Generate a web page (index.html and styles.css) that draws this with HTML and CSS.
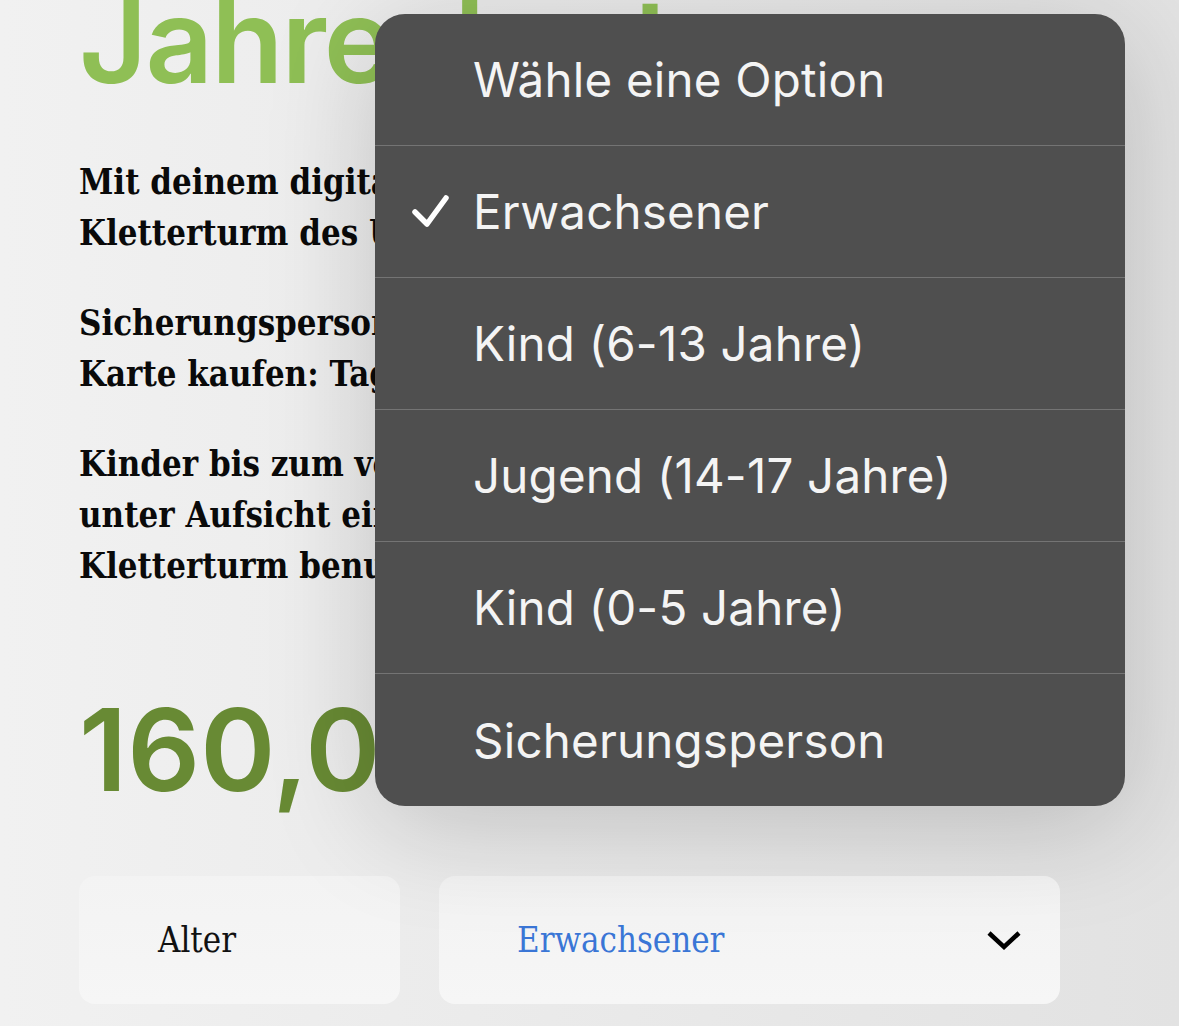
FILE: index.html
```html
<!DOCTYPE html>
<html lang="de">
<head>
<meta charset="utf-8">
<title>Jahreskarte</title>
<link rel="stylesheet" href="styles.css">
</head>
<body>
<main class="page">
  <h1 class="title">Jahreskarte</h1>
  <p class="text">Mit deinem digitalen Ticket kannst du den<br>Kletterturm des Uferparks ein Jahr nutzen.</p>
  <p class="text">Sicherungspersonen brauchen keine eigene<br>Karte kaufen: Tageskarte genügt.</p>
  <p class="text">Kinder bis zum vollendeten 6. Lebensjahr<br>unter Aufsicht eines Erwachsenen den<br>Kletterturm benutzen.</p>
  <div class="price">160,00 €</div>
  <div class="fields">
    <div class="field label">Alter</div>
    <div class="field select">
      <span class="value">Erwachsener</span>
      <svg class="chevron" width="36" height="22" viewBox="0 0 36 22" aria-hidden="true"><path d="M3 4 L18 18 L33 4" fill="none" stroke="#000" stroke-width="4.5"/></svg>
    </div>
  </div>
</main>
<div class="menu" role="listbox">
  <div class="option">Wähle eine Option</div>
  <div class="option selected"><svg class="check" width="40" height="36" viewBox="0 0 40 36" aria-hidden="true"><path d="M4 19 L16 31 L35 5" fill="none" stroke="#fff" stroke-width="5.5" stroke-linecap="round" stroke-linejoin="round"/></svg>Erwachsener</div>
  <div class="option">Kind (6-13 Jahre)</div>
  <div class="option">Jugend (14-17 Jahre)</div>
  <div class="option">Kind (0-5 Jahre)</div>
  <div class="option last">Sicherungsperson</div>
</div>
</body>
</html>
```
FILE: styles.css
```css
html, body {
  margin: 0;
  padding: 0;
  height: 100%;
  overflow: hidden;
}
body {
  background: #ececec;
  background-image: linear-gradient(90deg, #f1f1f1 0%, #ebebeb 40%, #e2e2e2 100%);
  font-family: "DejaVu Serif Condensed", "DejaVu Serif", serif;
}
.page {
  padding: 0 119px 0 79px;
  display: flex;
  flex-direction: column;
}
.title {
  margin: -30px 0 0;
  font-family: Inter, "Noto Sans", sans-serif;
  font-weight: 600;
  font-size: 118px;
  line-height: 140px;
  letter-spacing: -2px;
  color: #8fbf55;
  white-space: nowrap;
}
.text {
  margin: 47px 0 13px;
  font-weight: bold;
  font-stretch: condensed;
  font-size: 34.5px;
  line-height: 51px;
  color: #0a0a0a;
  white-space: nowrap;
}
.text + .text { margin-top: 26px; }
.price {
  margin-top: 80px;
  font-family: Inter, "Noto Sans", sans-serif;
  font-weight: 600;
  font-size: 114px;
  line-height: 130px;
  letter-spacing: 0;
  color: #688a34;
  white-space: nowrap;
}
.fields {
  margin-top: 61px;
  display: flex;
  gap: 39px;
}
.field {
  height: 128px;
  border-radius: 16px;
  background: linear-gradient(180deg, #f3f3f3, #f6f6f6);
  display: flex;
  align-items: center;
  font-size: 34.5px;
  font-stretch: condensed;
}
.label {
  width: 321px;
  padding-left: 79px;
  box-sizing: border-box;
  color: #111;
}
.select {
  width: 621px;
  padding: 0 38px 0 78px;
  box-sizing: border-box;
  justify-content: space-between;
  color: #3a76d6;
}
.menu {
  position: absolute;
  top: 14px;
  left: 375px;
  width: 750px;
  border-radius: 30px;
  background: #4f4f4f;
  overflow: hidden;
  box-shadow: 0 20px 110px rgba(0, 0, 0, 0.18);
  font-family: Inter, "Noto Sans", sans-serif;
}
.option {
  height: 131px;
  border-bottom: 1px solid #747474;
  display: flex;
  align-items: center;
  padding-left: 98px;
  position: relative;
  font-size: 47.5px;
  color: #f4f4f4;
  letter-spacing: 0.2px;
}
.option.last { border-bottom: none; height: 132px; }
.check {
  position: absolute;
  left: 36px;
  top: 47px;
}
```
